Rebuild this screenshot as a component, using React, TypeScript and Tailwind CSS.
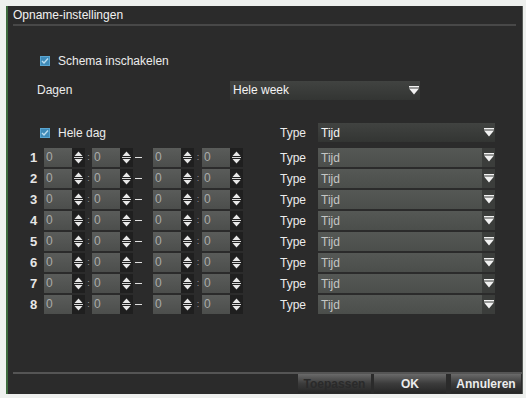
import React from 'react'

const rows = [1, 2, 3, 4, 5, 6, 7, 8]

const Check: React.FC = () => (
  <div className="w-[10px] h-[10px] bg-[#3f8bb9] border border-[#5aa6d2] flex items-center justify-center">
    <svg width="8" height="8" viewBox="0 0 8 8">
      <path d="M1 4 L3 6 L7 1.5" stroke="#b9dcef" strokeWidth="1.4" fill="none" />
    </svg>
  </div>
)

const DownArrow: React.FC = () => (
  <svg width="10" height="9" viewBox="0 0 10 9">
    <rect x="0" y="0" width="10" height="1.5" fill="#f2f2f2" />
    <path d="M0 2.5 H10 L5 8.5 Z" fill="#f2f2f2" />
  </svg>
)

const Spin: React.FC = () => (
  <div className="w-[13px] h-[19px] bg-[#1f1f1f] flex flex-col items-center justify-center gap-[1px]">
    <svg width="9" height="5" viewBox="0 0 9 5">
      <path d="M0.5 5 L4.5 0.5 L8.5 5 Z" fill="#e8e8e8" />
    </svg>
    <div className="w-[9px] h-[1px] bg-[#d8d8d8]" />
    <svg width="9" height="5" viewBox="0 0 9 5">
      <path d="M0.5 0 L4.5 4.5 L8.5 0 Z" fill="#e8e8e8" />
    </svg>
  </div>
)

const NumBox: React.FC = () => (
  <div className="w-[28px] h-[19px] bg-gradient-to-b from-[#5a5c5a] to-[#4c4e4c] text-[#a9aba9] pl-[2px] leading-[19px]">0</div>
)

const Select: React.FC<{ value: string; width: string; dark?: boolean }> = ({ value, width, dark }) => (
  <div
    className={`${width} h-[19px] flex items-center justify-between ${
      dark ? 'bg-gradient-to-b from-[#414341] to-[#333533] text-[#f4f4f4]' : 'bg-gradient-to-b from-[#555855] to-[#4b4e4b] text-[#c4c6c4]'
    }`}
  >
    <span className="pl-[3px]">{value}</span>
    <div className={`h-full w-[13px] flex items-center justify-center ${dark ? '' : 'bg-[#3b3d3b]'}`}>
      <DownArrow />
    </div>
  </div>
)

export default function App() {
  return (
    <div
      className="w-[526px] h-[398px] bg-[#eef0ee] pt-[6px] pl-[6px] text-[12px] text-[#ececec] overflow-hidden"
      style={{ fontFamily: '"Liberation Sans", Arial, sans-serif' }}
    >
      <div className="w-[517px] h-[388px] bg-[#2b2b2b] border-l-2 border-[#3e6a3e] border-r border-r-[#575a57] flex flex-col">
        <div className="h-[18px] pl-[5px] leading-[18px] text-[#f2f2f2]">Opname-instellingen</div>
        <div className="ml-[5px] mr-[6px] h-[2px] bg-[#484848]" />

        <div className="mt-[27px] h-[16px] pl-[32px] flex items-center gap-[8px]">
          <Check />
          <span>Schema inschakelen</span>
        </div>

        <div className="mt-[11px] h-[20px] pl-[29px] flex items-center">
          <span className="w-[193px]">Dagen</span>
          <Select value="Hele week" width="w-[190px]" dark />
        </div>

        <div className="mt-[23px] h-[19px] pl-[32px] flex items-center">
          <div className="w-[240px] flex items-center gap-[8px]">
            <Check />
            <span>Hele dag</span>
          </div>
          <span className="w-[38px]">Type</span>
          <Select value="Tijd" width="w-[177px]" dark />
        </div>

        <div className="mt-[6px] flex flex-col gap-[2px]">
          {rows.map(n => (
            <div key={n} className="h-[19px] pl-[22px] flex items-center">
              <span className="w-[14px] font-bold text-[13px] text-[#e6e6e6]">{n}</span>
              <NumBox />
              <Spin />
              <span className="w-[7px] text-center text-[9px] text-[#9a9a9a]">:</span>
              <NumBox />
              <Spin />
              <div className="w-[20px] flex items-center">
                <div className="ml-[2px] w-[7px] h-[1px] bg-[#e0e0e0]" />
              </div>
              <NumBox />
              <Spin />
              <span className="w-[8px] text-center text-[9px] text-[#9a9a9a]">:</span>
              <NumBox />
              <Spin />
              <span className="ml-[37px] w-[38px]">Type</span>
              <Select value="Tijd" width="w-[177px]" />
            </div>
          ))}
        </div>

        <div className="mt-auto ml-[5px] h-[2px] bg-[#555555]" />
        <div className="h-[19px] mb-[1px] flex justify-end pr-[1px]">
          <div className="w-[73px] h-full bg-gradient-to-b from-[#6a6a6a] via-[#3c3c3c] to-[#262626] text-[#2a2a2a] font-bold flex items-center justify-center">
            Toepassen
          </div>
          <div className="w-[3px]" />
          <div className="w-[72px] h-full bg-gradient-to-b from-[#6a6a6a] via-[#3c3c3c] to-[#262626] font-bold flex items-center justify-center">
            OK
          </div>
          <div className="w-[5px]" />
          <div className="w-[70px] h-full bg-gradient-to-b from-[#6a6a6a] via-[#3c3c3c] to-[#262626] font-bold flex items-center justify-center">
            Annuleren
          </div>
        </div>
      </div>
    </div>
  )
}
